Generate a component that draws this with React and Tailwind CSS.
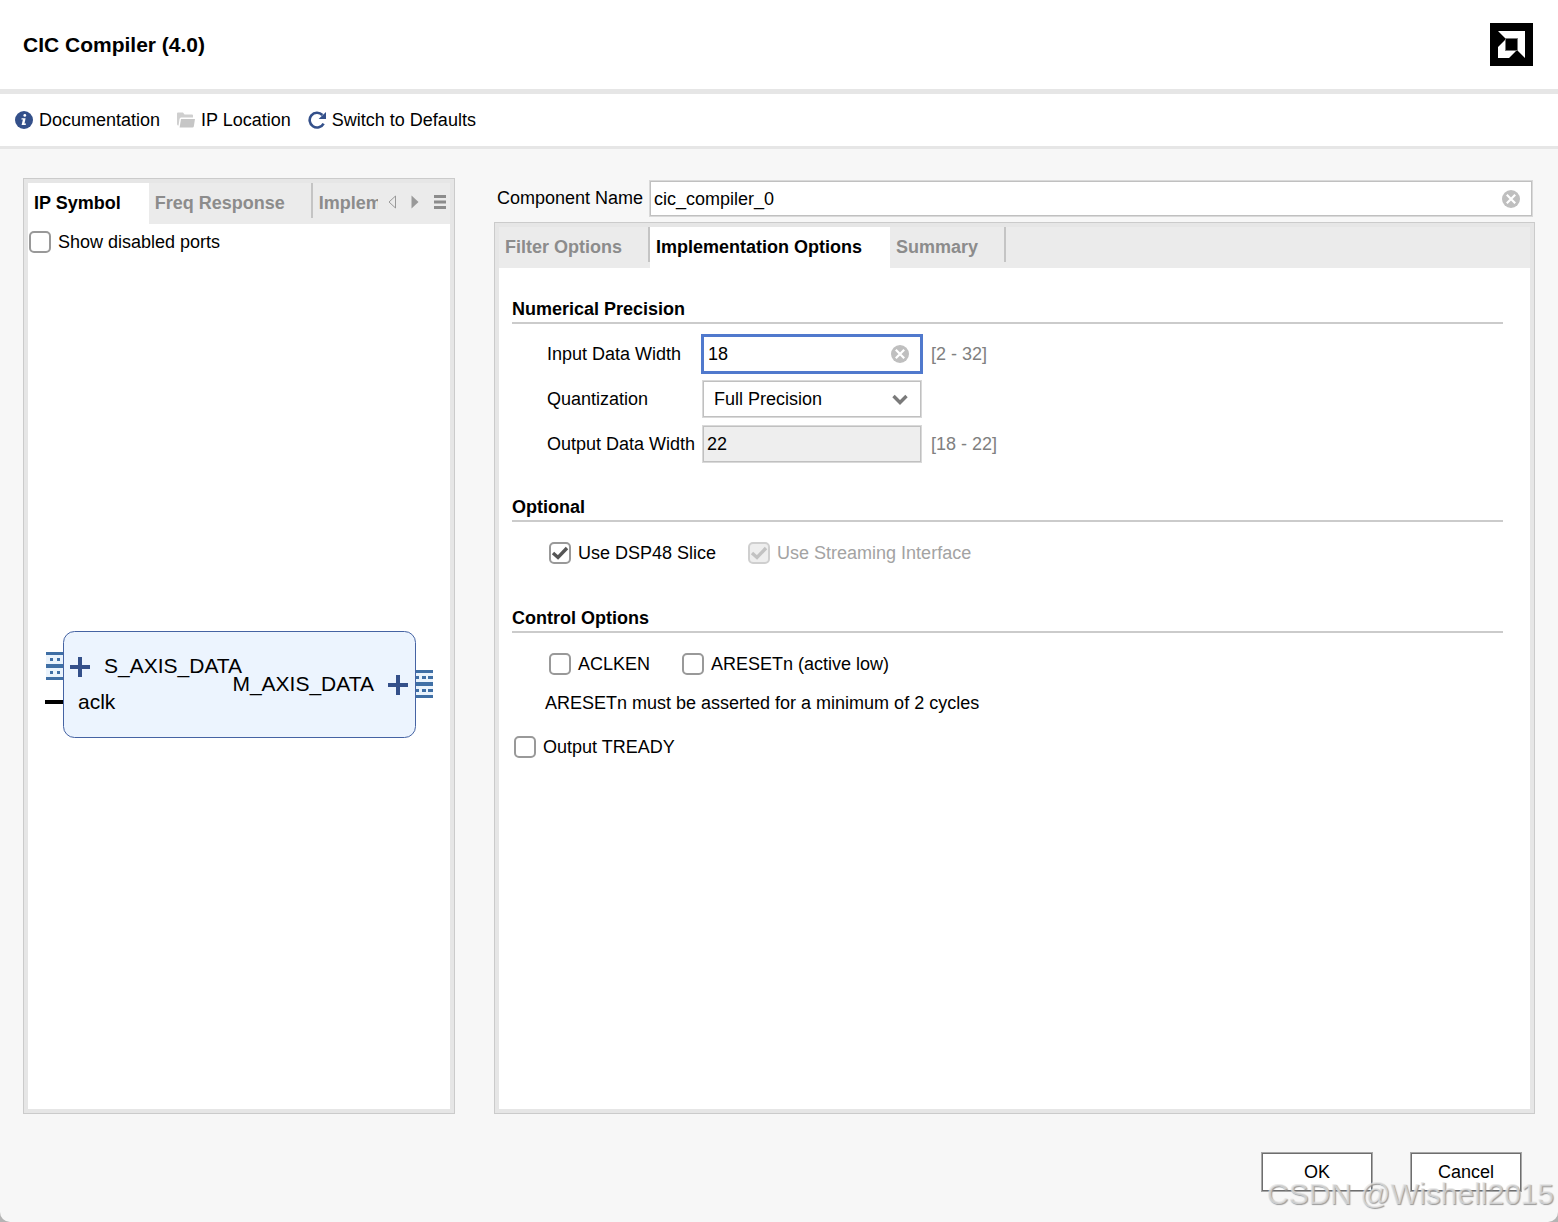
import { useState } from 'react'
import clsx from 'clsx'

function AmdLogo() {
  return (
    <svg className="w-[43px] h-[43px]" viewBox="0 0 43 43" role="img" aria-label="AMD">
      <rect width="43" height="43" fill="#000" />
      <path d="M8 8H35V35L27.5 27.5V15.5H15.5Z" fill="#fff" />
      <path d="M15.5 16.5V27.5H26.5L19 35H8V24Z" fill="#fff" />
      <path d="M15.5 15.5H27.5V27.5H15.5Z" fill="#000" stroke="#777" />
    </svg>
  )
}

function InfoIcon() {
  return (
    <svg className="w-[18px] h-[18px]" viewBox="0 0 18 18">
      <circle cx="9" cy="9" r="9" fill="#34508a" />
      <circle cx="9.8" cy="4.4" r="1.4" fill="#fff" />
      <path d="M6.6 7.2H10.6L9.5 12.6H11L10.7 14H6.6L7.9 8.5H6.4Z" fill="#fff" />
    </svg>
  )
}

function FolderIcon() {
  return (
    <svg className="w-[18px] h-[18px]" viewBox="0 0 18 18">
      <path d="M0 2.5Q0 1.5 1 1.5H6L7.5 3.5H15Q16 3.5 16 4.5V6.5H4Q2.8 6.5 2.5 8L1.6 14.5Q0 14.5 0 13Z" fill="#cfcfcf" />
      <path d="M4 8H18L16.8 15.5Q16.6 16.5 15.6 16.5H2.6Z" fill="#c6c6c6" />
    </svg>
  )
}

function RefreshIcon() {
  return (
    <svg className="w-[18px] h-[18px]" viewBox="0 0 18 18">
      <path d="M14.4 4A7.4 7.4 0 1 0 15.6 12.6" fill="none" stroke="#34508a" strokeWidth="2.6" />
      <path d="M18 1V8H10.6Z" fill="#34508a" />
    </svg>
  )
}

function ClearIcon() {
  return (
    <svg className="w-[18px] h-[18px]" viewBox="0 0 18 18">
      <circle cx="9" cy="9" r="9" fill="#bfbfbf" />
      <path d="M4.8 4.8L13.2 13.2M13.2 4.8L4.8 13.2" stroke="#fff" strokeWidth="2.2" />
    </svg>
  )
}

function ToolLink({ icon, children }) {
  return (
    <a href="#" className="flex items-center gap-1.5 leading-[26px]">
      {icon}
      {children}
    </a>
  )
}

function Tab({ active, separator, onClick, children }) {
  return (
    <button
      type="button"
      role="tab"
      aria-selected={active}
      onClick={onClick}
      className={clsx('h-[41px] flex items-start shrink-0 font-bold', active ? 'bg-white text-black' : 'text-[#8c8c8c]')}
    >
      <span className={clsx('h-[35px] flex items-center pl-1.5 pt-1 pr-[26px] border-r-2', separator ? 'border-[#c4c4c4]' : 'border-transparent')}>
        {children}
      </span>
    </button>
  )
}

function Panel({ tabs, children, className }) {
  return (
    <section className={clsx('flex flex-col border border-[#cbcbcb] bg-[#e6e6e6] p-1', className)}>
      <div className="flex bg-[#ebebeb]">{tabs}</div>
      <div className="flex-1 flex flex-col bg-white">{children}</div>
    </section>
  )
}

function Checkbox({ label, checked = false, disabled = false }) {
  return (
    <label className={clsx('flex items-center gap-[7px] leading-[22px]', disabled && 'text-[#a3a3a3]')}>
      <span className="relative flex">
        <input
          type="checkbox"
          defaultChecked={checked}
          disabled={disabled}
          className="peer appearance-none w-[22px] h-[22px] rounded-[5px] border-2 border-[#999] bg-white disabled:border-[#cfcfcf] disabled:bg-[#eee]"
        />
        <svg
          className="absolute inset-0 hidden peer-checked:block pointer-events-none text-[#555] peer-disabled:text-[#c2c2c2]"
          viewBox="0 0 22 22"
        >
          <path d="M4 11L9 15.5L18 6" fill="none" stroke="currentColor" strokeWidth="3.4" />
        </svg>
      </span>
      {label}
    </label>
  )
}

function SectionTitle({ children }) {
  return <h2 className="font-bold leading-[26px] border-b-2 border-[#cbcbcb]">{children}</h2>
}

function Symbol() {
  return (
    <svg className="w-[390px] h-[108px]" viewBox="0 0 390 108" fontFamily="Liberation Sans, Arial, sans-serif" fontSize="21">
      <rect x="18.5" y="0.5" width="352" height="106" rx="11" fill="#ecf4fe" stroke="#4563a3" />
      {/* S_AXIS_DATA bus port */}
      <rect x="1" y="21" width="17" height="28" fill="#eaf3fc" />
      <path d="M1 22.5H18M1 47.5H18" stroke="#3f6fa5" strokeWidth="3" />
      <path d="M1 35H18" stroke="#3f6fa5" strokeWidth="4" />
      <path d="M5 28.5H8M12 28.5H15M5 41.5H8M12 41.5H15" stroke="#3f6fa5" strokeWidth="3" />
      <path d="M25 36H45M35 26V46" stroke="#34508a" strokeWidth="4" />
      <text x="59" y="42">S_AXIS_DATA</text>
      {/* aclk pin */}
      <path d="M0 71H18" stroke="#000" strokeWidth="4" />
      <text x="33" y="78">aclk</text>
      {/* M_AXIS_DATA bus port */}
      <text x="329" y="60" textAnchor="end">M_AXIS_DATA</text>
      <path d="M343 54H363M353 44V64" stroke="#34508a" strokeWidth="4" />
      <rect x="371" y="39" width="17" height="28" fill="#eaf3fc" />
      <path d="M371 40.5H388M371 65.5H388" stroke="#3f6fa5" strokeWidth="3" />
      <path d="M371 53H388" stroke="#3f6fa5" strokeWidth="4" />
      <path d="M371 46.5H374M377 46.5H381M383 46.5H388M371 59.5H374M377 59.5H381M383 59.5H388" stroke="#3f6fa5" strokeWidth="3" />
    </svg>
  )
}

function NumericPrecision() {
  const [width, setWidth] = useState('18')

  return (
    <div className="grid grid-cols-[154px_222px_1fr] auto-rows-[40px] items-center gap-y-[5px] mt-2.5 pl-[35px]">
      <label htmlFor="input-width">Input Data Width</label>
      <div className="flex items-center h-10 border-[3px] border-[#5079cd] bg-white pl-1 pr-[11px]">
        <input
          id="input-width"
          value={width}
          onChange={e => setWidth(e.target.value)}
          className="flex-1 min-w-0 outline-none"
        />
        <button type="button" aria-label="Clear input data width" onClick={() => setWidth('')}>
          <ClearIcon />
        </button>
      </div>
      <span className="pl-2 text-[#808080]">[2 - 32]</span>

      <label htmlFor="quantization">Quantization</label>
      <div className="relative mx-px">
        <select id="quantization" className="appearance-none block w-full h-[38px] border border-[#d9d9d9] inset-ring inset-ring-[#c0c0c0] bg-white pl-[11px]">
          <option>Full Precision</option>
          <option>Truncation</option>
        </select>
        <svg className="absolute right-3.5 top-3.5 w-4 h-3 pointer-events-none" viewBox="0 0 16 12">
          <path d="M1.5 2L8 8.5L14.5 2" fill="none" stroke="#7a7a7a" strokeWidth="3.4" />
        </svg>
      </div>
      <span />

      <label htmlFor="output-width">Output Data Width</label>
      <input
        id="output-width"
        value="22"
        readOnly
        className="mx-px w-[220px] h-[38px] border border-[#d9d9d9] inset-ring inset-ring-[#c0c0c0] bg-[#eee] pl-1"
      />
      <span className="pl-2 text-[#808080]">[18 - 22]</span>
    </div>
  )
}

export default function App() {
  const [name, setName] = useState('cic_compiler_0')
  const [view, setView] = useState('IP Symbol')
  const [page, setPage] = useState('Implementation Options')

  return (
    <div className="bg-[#b4b4b4]">
      <div className="relative min-h-screen flex flex-col rounded-b-[10px] overflow-hidden bg-[#f7f7f7] text-black text-[18px] leading-6 font-['Liberation_Sans',Arial,sans-serif]">
        <header className="flex items-center justify-between h-[94px] bg-white border-b-[5px] border-[#e6e6e6] pl-[23px] pr-[25px]">
          <h1 className="text-[21px] font-bold">CIC Compiler (4.0)</h1>
          <AmdLogo />
        </header>

        <nav className="flex items-center gap-[17px] h-[55px] bg-white border-b-[3px] border-[#e6e6e6] px-[15px]">
          <ToolLink icon={<InfoIcon />}>Documentation</ToolLink>
          <ToolLink icon={<FolderIcon />}>IP Location</ToolLink>
          <ToolLink icon={<RefreshIcon />}>Switch to Defaults</ToolLink>
        </nav>

        <main className="flex-1 flex gap-[39px] pt-[29px] px-[23px]">
          <Panel
            className="w-[432px] shrink-0"
            tabs={
              <>
                <div role="tablist" className="flex w-[350px] overflow-hidden">
                  <Tab active={view === 'IP Symbol'} onClick={() => setView('IP Symbol')}>IP Symbol</Tab>
                  <Tab separator active={view === 'Freq Response'} onClick={() => setView('Freq Response')}>Freq Response</Tab>
                  <Tab active={view === 'Details'} onClick={() => setView('Details')}>Implementation Details</Tab>
                </div>
                <div className="flex-1 flex items-center justify-between pl-2.5 pr-1 pb-1">
                  <button type="button" aria-label="Previous tab">
                    <svg className="w-2 h-3.5" viewBox="0 0 8 14">
                      <path d="M7.5 1V13L1 7Z" fill="none" stroke="#999" />
                    </svg>
                  </button>
                  <button type="button" aria-label="Next tab">
                    <svg className="w-2 h-3.5" viewBox="0 0 8 14">
                      <path d="M0.5 0.5V13.5L7.5 7Z" fill="#999" />
                    </svg>
                  </button>
                  <button type="button" aria-label="Tab list">
                    <svg className="w-3 h-3.5" viewBox="0 0 12 14">
                      <path d="M0 1.5H12M0 7H12M0 12.5H12" stroke="#8c8c8c" strokeWidth="3" />
                    </svg>
                  </button>
                </div>
              </>
            }
          >
            <div className="flex py-[7px] pl-px">
              <Checkbox label="Show disabled ports" />
            </div>
            <div className="flex-1 flex items-center justify-center pl-0.5">
              <Symbol />
            </div>
          </Panel>

          <div className="flex-1 flex flex-col">
            <div className="flex items-start h-11 pt-0.5 pl-[3px] pr-0.5 gap-1.5">
              <label htmlFor="component-name" className="leading-[37px]">Component Name</label>
              <div className="flex-1 flex items-center h-[37px] border border-[#d9d9d9] inset-ring inset-ring-[#c0c0c0] bg-white pl-1 pr-3">
                <input
                  id="component-name"
                  value={name}
                  onChange={e => setName(e.target.value)}
                  className="flex-1 outline-none"
                />
                <button type="button" aria-label="Clear component name" onClick={() => setName('')}>
                  <ClearIcon />
                </button>
              </div>
            </div>

            <Panel
              className="flex-1"
              tabs={
                <div role="tablist" className="flex">
                  <Tab separator active={page === 'Filter Options'} onClick={() => setPage('Filter Options')}>Filter Options</Tab>
                  <Tab active={page === 'Implementation Options'} onClick={() => setPage('Implementation Options')}>Implementation Options</Tab>
                  <Tab separator active={page === 'Summary'} onClick={() => setPage('Summary')}>Summary</Tab>
                </div>
              }
            >
              <div className="pt-7 pl-[13px] pr-[27px]">
                <SectionTitle>Numerical Precision</SectionTitle>
                <NumericPrecision />

                <div className="mt-[30px]">
                  <SectionTitle>Optional</SectionTitle>
                  <div className="flex gap-8 mt-5 pl-[37px]">
                    <Checkbox label="Use DSP48 Slice" checked />
                    <Checkbox label="Use Streaming Interface" checked disabled />
                  </div>
                </div>

                <div className="mt-[41px]">
                  <SectionTitle>Control Options</SectionTitle>
                  <div className="flex gap-8 mt-5 pl-[37px]">
                    <Checkbox label="ACLKEN" />
                    <Checkbox label="ARESETn (active low)" />
                  </div>
                  <p className="mt-4 pl-[33px]">ARESETn must be asserted for a minimum of 2 cycles</p>
                </div>

                <div className="flex mt-[21px] pl-0.5">
                  <Checkbox label="Output TREADY" />
                </div>
              </div>
            </Panel>
          </div>
        </main>

        <footer className="flex justify-end gap-[37px] pt-[38px] pb-[30px] pr-9">
          <button type="button" className="w-28 h-10 bg-white border border-[#a8a8a8] inset-ring inset-ring-[#6e6e6e]">OK</button>
          <button type="button" className="w-28 h-10 bg-white border border-[#a8a8a8] inset-ring inset-ring-[#6e6e6e]">Cancel</button>
        </footer>

        <span className="absolute right-1 bottom-2 text-[30px] leading-10 text-[#e4e4e4]/70 [text-shadow:1px_1px_1px_#999] pointer-events-none">
          CSDN @Wishell2015
        </span>
      </div>
    </div>
  )
}
